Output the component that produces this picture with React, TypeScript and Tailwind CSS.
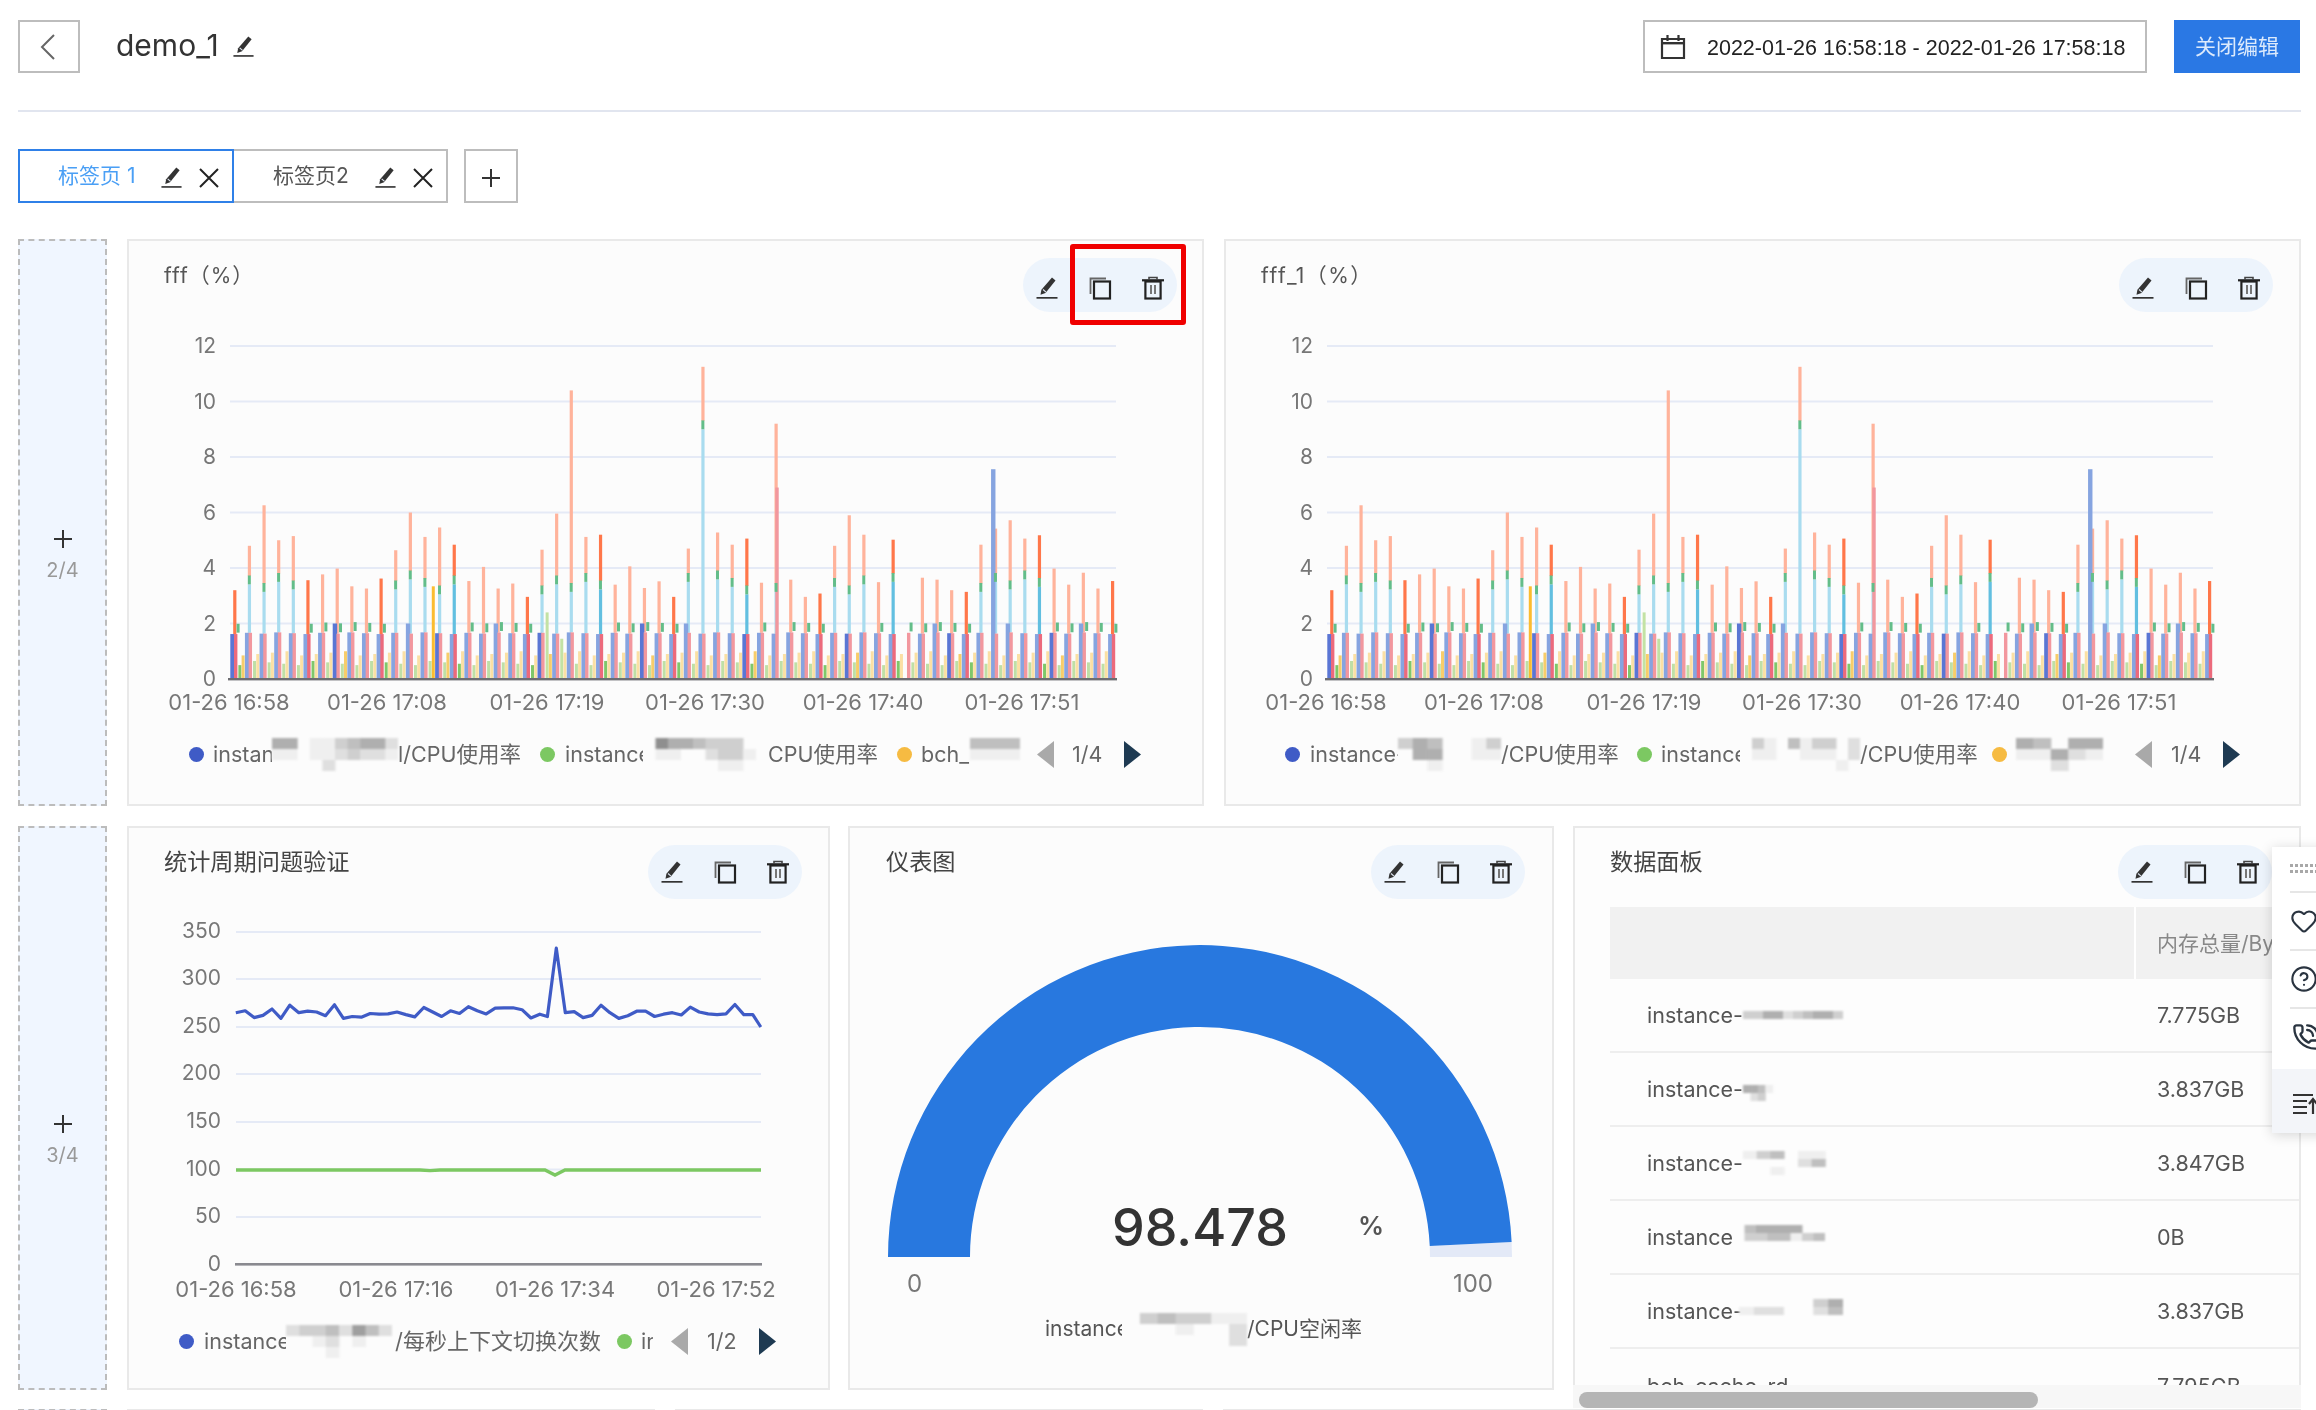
import React from "react";
import { Heart, CircleHelp, PhoneCall } from "lucide-react";

const Pen = ({ size = 24 }: { size?: number }) => (
  <svg width={size} height={size} viewBox="0 0 24 24" className="block shrink-0">
    <path d="M17 1.5l3.5 3L10.5 17l-5 1.7.9-5z" fill="#333" />
    <path d="M8 13.5l3 2.6" stroke="#dfe6f0" strokeWidth="1.2" />
    <rect x="1.5" y="21" width="21" height="1.7" fill="#333" />
  </svg>
);
const CopyIcon = () => (
  <svg width={24} height={24} viewBox="0 0 24 24" className="block shrink-0">
    <path d="M2.5 18V2.5H18" fill="none" stroke="#666" strokeWidth="1.8" />
    <rect x="6" y="5.5" width="16" height="17" fill="none" stroke="#222" strokeWidth="2.2" />
  </svg>
);
const TrashIcon = () => (
  <svg width={24} height={24} viewBox="0 0 24 24" className="block shrink-0">
    <path d="M8 3.2V1.5h8v1.7" fill="none" stroke="#444" strokeWidth="1.6" />
    <rect x="1" y="3.2" width="22" height="2.2" fill="#222" />
    <rect x="4.4" y="5.5" width="15.2" height="17" fill="none" stroke="#222" strokeWidth="2.2" />
    <rect x="9" y="9" width="2" height="9" fill="#777" />
    <rect x="13" y="9" width="2" height="9" fill="#777" />
  </svg>
);
const XIcon = () => (
  <svg width={22} height={22} viewBox="0 0 22 22" className="block shrink-0">
    <path d="M2 2l18 18M20 2L2 20" stroke="#222" strokeWidth="2" />
  </svg>
);

const Toolbar = ({ low }: { low?: boolean }) => (
  <div className={`flex h-[54px] w-[154px] shrink-0 items-center gap-[29px] rounded-full bg-[#edf4fc] pl-[12px] ${low ? "pt-[6px]" : ""}`}>
    <Pen />
    <CopyIcon />
    <TrashIcon />
  </div>
);

const Mosaic = ({ w, rows, h = 11 }: { w: number; rows: string[]; h?: number }) => {
  const cols = rows[0].length;
  const cw = w / cols;
  return (
    <svg width={w} height={rows.length * h} className="block shrink-0 blur-[1px]">
      {rows.map((r, y) =>
        r.split("").map((c, x) => {
          const n = Number(c);
          if (!n) return null;
          const g = 255 - n * 16;
          return <rect key={`${x}-${y}`} x={x * cw} y={y * h} width={cw + 0.5} height={h} fill={`rgb(${g},${g},${g})`} />;
        })
      )}
    </svg>
  );
};

const Dot = ({ c }: { c: "blue" | "green" | "orange" }) =>
  c === "blue" ? (
    <span className="block h-[15px] w-[15px] shrink-0 rounded-full bg-[#3f5bc6]" />
  ) : c === "green" ? (
    <span className="block h-[15px] w-[15px] shrink-0 rounded-full bg-[#7cc862]" />
  ) : (
    <span className="block h-[15px] w-[15px] shrink-0 rounded-full bg-[#f6bb42]" />
  );

const Pager = ({ text, gapA, gapB }: { text: string; gapA: string; gapB: string }) => (
  <>
    <svg width={17} height={27} viewBox="0 0 17 27" className="block shrink-0">
      <path d="M17 0v27L0 13.5z" fill="#a9a9a9" />
    </svg>
    <span className={`block whitespace-nowrap ${gapA}`}>{text}</span>
    <svg width={17} height={27} viewBox="0 0 17 27" className={`block shrink-0 ${gapB}`}>
      <path d="M0 0v27l17-13.5z" fill="#1e3a52" />
    </svg>
  </>
);

const TALL = [
  3.2, 4.8, 6.26, 5.0, 5.15, 3.56, 3.77, 3.98, 3.34, 3.26, 3.62, 4.64, 6.0, 5.12, 5.46, 4.84, 3.53, 4.04, 3.26, 3.44, 2.96, 4.66, 5.96,
  10.4, 5.12, 5.2, 3.4, 4.06, 3.28, 3.52, 2.96, 4.7, 11.25, 5.28, 4.84, 5.06, 3.47, 9.2, 3.58, 2.96, 3.08, 4.8, 5.9, 5.2, 3.49, 5.02, 1.97,
  3.65, 3.58, 3.2, 3.14, 4.84, 5.42, 5.72, 5.06, 5.18, 3.98, 3.4, 3.83, 3.26, 3.53,
];

const Bars = () => {
  const y = (v: number) => 679 - v * 27.75;
  const R = (x: number, w: number, a: number, b: number, fill: string, k: string) => (
    <rect key={k} x={x} width={w} y={y(b)} height={(b - a) * 27.75} fill={fill} />
  );
  return (
    <g>
      {TALL.map((t, i) => {
        const x = 234.6 + 14.63 * i;
        const strong = (i * 7) % 5 === 0;
        const strong2 = (i * 3) % 7 === 0;
        const base = 1.62 + ((i * 13) % 5) * 0.015;
        const blueH = i === 52 ? 7.56 : [7, 12, 18, 28, 31, 46, 48, 53, 58].includes(i) ? 2.0 : base;
        const hasCyan = t >= 4.4 || i === 32;
        const cyanTop = i === 32 ? 9.0 : 3.05 + ((i * 11) % 7) * 0.09;
        const pinkTop = i === 37 ? 6.9 : base;
        const tipA = hasCyan ? cyanTop : i === 37 ? 6.9 : base + 0.05;
        const tipX = hasCyan || i === 37 ? x - 1.4 : x + 2;
        const yellow = i === 13 ? 3.34 : 0.85 + ((i * 5) % 4) * 0.05;
        const green = i === 21 ? 2.4 : i === 22 ? 1.45 : 0.5 + ((i * 3) % 4) * 0.05;
        return (
          <g key={i}>
            {i === 60 ? null : R(x + 3.8, 3, 0, green, i === 21 || i === 22 ? "#c3e2a4" : strong ? "#7fc76a" : "#bfdfa6", "g")}
            {i === 60 ? null : R(x + 7, 3, 0, yellow, i === 13 ? "#fbbc30" : strong2 ? "#f7cd6a" : "#fbe0a4", "y")}
            {i === 46 ? null : R(x - 1.4, 3.2, hasCyan ? cyanTop + 0.3 : base, t, strong ? "#ff774a" : "#ffb39b", "t")}
            {hasCyan ? R(x - 1.4, 3.2, base, cyanTop, strong ? "#62bfe0" : "#a9dcef", "c") : null}
            {i === 46 ? null : R(x - 4.3, 4.4, 0, blueH, strong2 ? "#5a76d4" : "#86a4e0", "b")}
            {R(x - 0.6, 3.4, 0, pinkTop, strong ? "#ec6a7c" : "#f2979e", "p")}
            {R(tipX, 3, tipA, tipA + 0.32, "#63bd89", "tip")}
          </g>
        );
      })}
    </g>
  );
};

const BarChart = () => (
  <svg viewBox="129 320 1072 406" width={1072} height={406} className="mt-[8px] block fill-[#777] text-[21px]">
    {[0, 2, 4, 6, 8, 10, 12].map((v) => {
      const yy = 679 - v * 27.75;
      return (
        <g key={v}>
          {v > 0 ? <rect x={230} y={yy - 1} width={886} height={2} fill="#e5eaf6" /> : null}
          <text x={216} y={yy + 7} textAnchor="end">
            {v}
          </text>
        </g>
      );
    })}
    <Bars />
    <rect x={228} y={678} width={889} height={2.4} fill="#6d6d72" />
    {[
      [229, "01-26 16:58"],
      [387, "01-26 17:08"],
      [547, "01-26 17:19"],
      [705, "01-26 17:30"],
      [863, "01-26 17:40"],
      [1022, "01-26 17:51"],
    ].map(([x, t]) => (
      <text key={t as string} x={x as number} y={710} textAnchor="middle" className="text-[22px]">
        {t}
      </text>
    ))}
  </svg>
);

const BLUE_RAW: [number, number][] = [
  [237, 510], [258, 505], [278, 523], [298, 517], [318, 500], [338, 525], [358, 490], [378, 510], [398, 506], [418, 508], [438, 518], [458, 489],
  [478, 525], [498, 520], [518, 522], [538, 512], [558, 514], [578, 513], [598, 508], [618, 515], [638, 521], [658, 496], [678, 508], [698, 520],
  [718, 505], [738, 512], [758, 494], [778, 505], [798, 513], [818, 498], [838, 497], [858, 497], [878, 502], [898, 524], [918, 514], [935, 520],
  [955, 338], [975, 510], [995, 507], [1015, 523], [1035, 517], [1055, 490], [1075, 510], [1095, 525], [1115, 518], [1135, 506], [1155, 506],
  [1175, 520], [1195, 514], [1215, 510], [1235, 516], [1255, 495], [1275, 508], [1295, 513], [1315, 515], [1335, 513], [1355, 488], [1375, 515],
  [1395, 515], [1413, 548],
];
const bluePts = BLUE_RAW.map(([a, b]) => `${(130 + a / 2.24).toFixed(1)},${(820 + b / 2.66).toFixed(1)}`).join(" ");

const LineChart = () => (
  <svg viewBox="129 905 699 405" width={699} height={405} className="mt-[7px] block fill-[#777] text-[21px]">
    {[
      [0, 1263.5],
      [50, 1216],
      [100, 1168.5],
      [150, 1121],
      [200, 1073],
      [250, 1026],
      [300, 978],
      [350, 931],
    ].map(([v, yy]) => (
      <g key={v}>
        {v > 0 ? <rect x={236} y={yy - 1} width={525} height={2} fill="#e5eaf6" /> : null}
        <text x={221} y={yy + 6} textAnchor="end">
          {v}
        </text>
      </g>
    ))}
    <rect x={235} y={1262} width={527} height={2.6} fill="#8a8a90" />
    <polyline points={bluePts} fill="none" stroke="#3f5bc6" strokeWidth="3.2" strokeLinejoin="round" />
    <polyline
      points="236,1169 420,1169 430,1169.6 440,1169 545,1169 555,1174 565,1169 761,1169"
      fill="none"
      stroke="#7cc862"
      strokeWidth="3.4"
    />
    {[
      [236, "01-26 16:58"],
      [396, "01-26 17:16"],
      [555, "01-26 17:34"],
      [716, "01-26 17:52"],
    ].map(([x, t]) => (
      <text key={t as string} x={x as number} y={1296} textAnchor="middle" className="text-[22px]">
        {t}
      </text>
    ))}
  </svg>
);

const Gauge = () => (
  <svg viewBox="850 905 702 395" width={702} height={395} className="mt-[6px] block">
    <path d="M1511.64 1242.09L1512 1257H1430L1429.74 1246z" fill="#e3e9f7" />
    <path d="M888 1257A312 312 0 0 1 1511.64 1242.09L1429.74 1246A230 230 0 0 0 970 1257z" fill="#2878df" />
    <text x={1200} y={1246} textAnchor="middle" className="fill-[#333] text-[52px] font-medium">
      98.478
    </text>
    <text x={1371} y={1235} textAnchor="middle" className="fill-[#555] text-[26px] font-semibold">
      %
    </text>
    <text x={914.5} y={1292} textAnchor="middle" className="fill-[#777] text-[24px]">
      0
    </text>
    <text x={1473} y={1292} textAnchor="middle" className="fill-[#777] text-[24px]">
      100
    </text>
  </svg>
);

const rowsData: { pre: string; pw: string; m: string[]; mw: number; val: string }[] = [
  { pre: "instance-", pw: "w-[96px]", m: ["0000000000", "3355234553", "0000000000"], mw: 100, val: "7.775GB" },
  { pre: "instance-", pw: "w-[96px]", m: ["0000000", "5541000", "0230000"], mw: 52, val: "3.837GB" },
  { pre: "instance-", pw: "w-[96px]", m: ["1340110", "0000240", "0010000"], mw: 96, val: "3.847GB" },
  { pre: "instance", pw: "w-[86px]", m: ["04555500", "03344134", "00000000"], mw: 92, val: "0B" },
  { pre: "instance-", pw: "w-[92px]", m: ["0000035", "1220024", "0000000"], mw: 104, val: "3.837GB" },
];

const DataTable = () => (
  <div className="ml-[35px] mt-[8px] flex-1 overflow-hidden">
    <div className="flex h-[72px] bg-[#f1f1f1]">
      <div className="w-[526px] shrink-0 border-r-2 border-white" />
      <div className="flex-1 overflow-hidden pl-[21px] pt-[22px] text-[21px] leading-[30px] whitespace-nowrap text-[#888]">内存总量/Bytes</div>
    </div>
    {rowsData.map((r, i) => (
      <div key={i} className="flex h-[74px] items-center border-b-2 border-[#eeeeee] text-[21.5px] text-[#555]">
        <div className="flex w-[526px] shrink-0 items-center pl-[37px]">
          <span className={`block whitespace-nowrap ${r.pw}`}>{r.pre}</span>
          <Mosaic w={r.mw} rows={r.m} h={8} />
        </div>
        <div className="pl-[21px]">{r.val}</div>
      </div>
    ))}
    <div className="flex h-[74px] items-center text-[21.5px] text-[#555]">
      <div className="w-[526px] shrink-0 pl-[37px]">bch_cache_rd</div>
      <div className="pl-[21px]">7.795GB</div>
    </div>
  </div>
);

const Drop = ({ label, heightClass }: { label: string; heightClass: string }) => (
  <div
    className={`flex w-[89px] shrink-0 flex-col items-center justify-center border-2 border-dashed border-[#bcbcbc] bg-[#f0f6ff] pt-[66px] text-[20px] text-[#999] ${heightClass}`}
  >
    <svg width={20} height={20} viewBox="0 0 20 20" className="block">
      <path d="M10 1v18M1 10h18" stroke="#333" strokeWidth="2" />
    </svg>
    <span className="mt-[8px] block leading-[26px]">{label}</span>
  </div>
);

const Tab = ({ active, label }: { active: boolean; label: string }) =>
  active ? (
    <div className="flex h-[54px] w-[216px] items-center border-2 border-[#2f80e8] pl-[38px] text-[21px] text-[#4a9ff5]">
      <span className="block w-[102px] whitespace-nowrap">{label}</span>
      <span className="mt-[3px] block">
        <Pen size={23} />
      </span>
      <span className="ml-[15px] mt-[3px] block">
        <XIcon />
      </span>
    </div>
  ) : (
    <div className="flex h-[54px] w-[214px] items-center border-2 border-l-0 border-[#bdbdbd] pl-[39px] text-[21px] text-[#555]">
      <span className="block w-[101px] whitespace-nowrap">{label}</span>
      <span className="mt-[3px] block">
        <Pen size={23} />
      </span>
      <span className="ml-[15px] mt-[3px] block">
        <XIcon />
      </span>
    </div>
  );

export default function App() {
  return (
    <div className="relative h-[1410px] w-[2316px] overflow-hidden bg-white pl-[18px] pr-[15px] pt-[20px] font-['Inter','Noto_Sans_CJK_SC',sans-serif] blur-[0.6px]">
      {/* Header */}
      <div className="flex h-[53px] items-center">
        <div className="flex h-[53px] w-[62px] items-center justify-center border-2 border-[#bdbdbd]">
          <svg width={16} height={28} viewBox="0 0 16 28" className="mr-[3px]">
            <path d="M14 2L2 14l12 12" fill="none" stroke="#666" strokeWidth="2" />
          </svg>
        </div>
        <span className="mb-[3px] ml-[36px] block text-[30px] leading-[40px] text-[#333]">demo_1</span>
        <span className="ml-[13px] block">
          <Pen size={23} />
        </span>
        <div className="ml-auto flex h-[53px] w-[504px] items-center border-2 border-[#bdbdbd] pl-[15px] font-['Liberation_Sans',sans-serif] text-[21.5px] text-[#222]">
          <svg width={26} height={26} viewBox="0 0 26 26" className="block shrink-0">
            <path d="M2 5h22v19H2z" fill="none" stroke="#333" strokeWidth="2.2" />
            <rect x="2" y="8" width="22" height="2.4" fill="#333" />
            <path d="M7.5 1v6M18.5 1v6" stroke="#333" strokeWidth="2.2" />
          </svg>
          <span className="ml-[21px] mt-[3px] block whitespace-nowrap">2022-01-26 16:58:18 - 2022-01-26 17:58:18</span>
        </div>
        <div className="ml-[27px] mr-[1px] flex h-[53px] w-[126px] items-center justify-center bg-[#2a78e4] text-[21px] text-[#dceafc]">关闭编辑</div>
      </div>
      <div className="mt-[37px] h-[2px] bg-[#e1e5ef]" />
      {/* Tabs */}
      <div className="mt-[37px] flex">
        <Tab active label="标签页 1" />
        <Tab active={false} label="标签页2" />
        <div className="ml-[16px] flex h-[54px] w-[54px] items-center justify-center border-2 border-[#bdbdbd]">
          <svg width={20} height={20} viewBox="0 0 20 20" className="mt-[4px]">
            <path d="M10 1v18M1 10h18" stroke="#333" strokeWidth="2" />
          </svg>
        </div>
      </div>
      {/* Row 1 */}
      <div className="mt-[36px] flex h-[567px] gap-[20px]">
        <Drop label="2/4" heightClass="h-[567px]" />
        <div className="relative flex-1 border-2 border-[#e9e9e9] bg-[#fcfcfc]">
          <div className="flex items-start justify-between pl-[35px] pr-[25px] pt-[17px]">
            <span className="mt-[3px] block text-[21px] leading-[30px] tracking-[1px] text-[#555]">fff（%）</span>
            <Toolbar low />
          </div>
          <BarChart />
          <div className="mt-[8px] flex h-[40px] items-center pl-[60px] text-[21.5px] text-[#666]">
            <Dot c="blue" />
            <span className="ml-[9px] block w-[59px] overflow-hidden whitespace-nowrap">instan</span>
            <Mosaic w={126} rows={["5501134552", "1101123221", "0000200000"]} />
            <span className="block w-[124px] whitespace-nowrap">l/CPU使用率</span>
            <span className="ml-[18px] block">
              <Dot c="green" />
            </span>
            <span className="ml-[10px] block w-[78px] overflow-hidden whitespace-nowrap">instance</span>
            <Mosaic w={125} rows={["0755433300", "0110023310", "0000001100"]} />
            <span className="block w-[110px] whitespace-nowrap">CPU使用率</span>
            <span className="ml-[19px] block">
              <Dot c="orange" />
            </span>
            <span className="ml-[9px] block w-[49px] overflow-hidden whitespace-nowrap">bch_</span>
            <Mosaic w={50} rows={["4444", "1111", "0000"]} />
            <span className="ml-[17px] flex items-center">
              <Pager text="1/4" gapA="ml-[18px]" gapB="ml-[22px]" />
            </span>
          </div>
          <div className="absolute left-[941px] top-[3px] h-[81px] w-[116px] rounded-[3px] border-[5px] border-[#f00000]" />
        </div>
        <div className="flex-1 border-2 border-[#e9e9e9] bg-[#fcfcfc]">
          <div className="flex items-start justify-between pl-[35px] pr-[26px] pt-[17px]">
            <span className="mt-[3px] block text-[21px] leading-[30px] tracking-[1.5px] text-[#555]">fff_1（%）</span>
            <Toolbar low />
          </div>
          <BarChart />
          <div className="mt-[8px] flex h-[40px] items-center pl-[59px] text-[21.5px] text-[#666]">
            <Dot c="blue" />
            <span className="ml-[10px] block w-[88px] overflow-hidden whitespace-nowrap">instance-</span>
            <Mosaic w={103} rows={["3540013", "0550011", "0010000"]} />
            <span className="block w-[119px] whitespace-nowrap">/CPU使用率</span>
            <span className="ml-[17px] block">
              <Dot c="green" />
            </span>
            <span className="ml-[9px] block w-[79px] overflow-hidden whitespace-nowrap">instance</span>
            <Mosaic w={120} rows={["0310413302", "0110011102", "0000000010"]} />
            <span className="block w-[115px] whitespace-nowrap">/CPU使用率</span>
            <span className="ml-[17px] block">
              <Dot c="orange" />
            </span>
            <span className="ml-[9px] block">
              <Mosaic w={87} rows={["54055", "11521", "00200"]} />
            </span>
            <span className="ml-[32px] flex items-center">
              <Pager text="1/4" gapA="ml-[19px]" gapB="ml-[22px]" />
            </span>
          </div>
        </div>
      </div>
      {/* Row 2 */}
      <div className="mt-[20px] flex h-[564px]">
        <Drop label="3/4" heightClass="h-[564px]" />
        <div className="ml-[20px] w-[703px] border-2 border-[#e9e9e9] bg-[#fcfcfc]">
          <div className="flex items-start justify-between pl-[35px] pr-[26px] pt-[17px]">
            <span className="mt-[2px] block text-[23.2px] leading-[30px] text-[#444]">统计周期问题验证</span>
            <Toolbar />
          </div>
          <LineChart />
          <div className="mt-[10px] flex h-[40px] items-center pl-[50px] text-[21.5px] text-[#666]">
            <Dot c="blue" />
            <span className="ml-[10px] block w-[82px] overflow-hidden whitespace-nowrap">instance</span>
            <Mosaic w={106} rows={["23342642", "00120100", "00010000"]} />
            <span className="ml-[3px] block w-[205px] whitespace-nowrap text-[22px]">/每秒上下文切换次数</span>
            <span className="ml-[17px] block">
              <Dot c="green" />
            </span>
            <span className="ml-[9px] block w-[12px] overflow-hidden whitespace-nowrap">in</span>
            <span className="ml-[18px] flex items-center">
              <Pager text="1/2" gapA="ml-[19px]" gapB="ml-[22px]" />
            </span>
          </div>
        </div>
        <div className="ml-[18px] w-[706px] border-2 border-[#e9e9e9] bg-[#fcfcfc]">
          <div className="flex items-start justify-between pl-[36px] pr-[27px] pt-[17px]">
            <span className="mt-[2px] block text-[23.2px] leading-[30px] text-[#444]">仪表图</span>
            <Toolbar />
          </div>
          <Gauge />
          <div className="mt-[9px] flex h-[40px] items-center justify-center text-[21px] text-[#555]">
            <span className="block w-[77px] overflow-hidden whitespace-nowrap">instance</span>
            <Mosaic w={125} rows={["0343311", "0001002", "0000002"]} />
            <span className="block w-[110px] whitespace-nowrap">/CPU空闲率</span>
          </div>
        </div>
        <div className="relative ml-[19px] flex w-[728px] flex-col border-2 border-[#e9e9e9] bg-[#fdfdfd]">
          <div className="flex items-start justify-between pl-[35px] pr-[27px] pt-[17px]">
            <span className="mt-[2px] block text-[23.2px] leading-[30px] text-[#444]">数据面板</span>
            <Toolbar />
          </div>
          <DataTable />
          <div className="absolute -bottom-[20px] -left-[2px] -right-[2px] z-10 h-[23px] bg-[#f7f7f7]">
            <div className="ml-[6px] mt-[7px] h-[16px] w-[459px] rounded-full bg-[#b5b5b5]" />
          </div>
        </div>
      </div>
      {/* Row 3 sliver */}
      <div className="mt-[19px] flex h-[100px]">
        <div className="w-[89px] border-2 border-dashed border-[#bcbcbc] bg-[#f0f6ff]" />
        <div className="ml-[20px] w-[528px] border-2 border-[#e9e9e9]" />
        <div className="ml-[20px] w-[528px] border-2 border-[#e9e9e9]" />
        <div className="ml-[20px] w-[1078px] border-2 border-[#e9e9e9]" />
      </div>
      {/* Floating side panel */}
      <div className="absolute left-[2272px] top-[847px] z-20 w-[70px] bg-white shadow-[0_2px_12px_rgba(0,0,0,0.16)]">
        <div className="ml-[18px] flex h-[46px] items-center border-b-2 border-[#e6e6e6]">
          <svg width={30} height={12} viewBox="0 0 30 12" className="block">
            {[0, 5, 10, 15, 20, 25].flatMap((x) =>
              [1, 7].map((yy) => <rect key={`${x}-${yy}`} x={x} y={yy} width={3} height={3} fill="#a8a8a8" />)
            )}
          </svg>
        </div>
        <div className="ml-[18px] flex h-[58px] items-center border-b-2 border-[#e6e6e6]">
          <Heart size={28} strokeWidth={1.8} color="#2a3440" />
        </div>
        <div className="ml-[18px] flex h-[58px] items-center border-b-2 border-[#e6e6e6]">
          <CircleHelp size={28} strokeWidth={1.8} color="#2a3440" />
        </div>
        <div className="ml-[20px] flex h-[60px] items-center pb-[5px]">
          <PhoneCall size={28} strokeWidth={2} color="#2a3440" />
        </div>
        <div className="flex h-[64px] items-center bg-[#f3f5f9] pl-[20px] pt-[5px]">
          <svg width={40} height={24} viewBox="0 0 40 24" className="block">
            <path d="M1 3h20M1 9h14M1 15h14M1 21h14" stroke="#333" strokeWidth="2" />
            <path d="M21 22V8M17 12l4-5 4 5" stroke="#333" strokeWidth="2.2" fill="none" />
          </svg>
        </div>
      </div>
    </div>
  );
}
